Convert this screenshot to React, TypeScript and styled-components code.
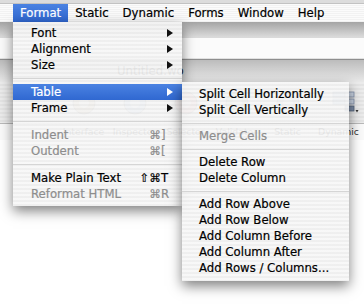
import React from "react";
import styled, { createGlobalStyle, css } from "styled-components";

const Global = createGlobalStyle`
  html, body { margin: 0; padding: 0; background: #ffffff; }
  body { font-family: "DejaVu Sans", "Liberation Sans", sans-serif; }
`;

const Screen = styled.div`
  position: relative;
  width: 364px;
  height: 304px;
  overflow: hidden;
  display: flex;
  flex-direction: column;
  background: #ffffff;
  font-size: 11.7px;
  color: #000;
`;

const TopEdge = styled.div`
  height: 3px;
  background: #dcdcdc;
  border-bottom: 1px solid #c2c2c2;
`;

const MenuBar = styled.div`
  display: flex;
  height: 18px;
  padding-left: 13px;
  background: repeating-linear-gradient(to bottom, #fbfbfb 0 1px, #f2f2f2 1px 2px);
  -webkit-text-stroke: 0.2px currentColor;
`;

const MenuTitle = styled.div<{ $active?: boolean }>`
  display: flex;
  align-items: center;
  padding: 0 7px;
  white-space: nowrap;
  ${(p) =>
    p.$active &&
    css`
      background: linear-gradient(#4a82e2, #2f66cf);
      color: #fff;
    `}
`;

const BrowserBar = styled.div`
  height: 38px;
  box-sizing: border-box;
  padding-top: 16px;
  background: linear-gradient(#a5a5a5, #dadada 15px, #e2e2e2);
  border-bottom: 1px solid #8e8e8e;
`;

const AddressField = styled.div`
  height: 20px;
  background: #fbfbfb;
`;

const TitleBar = styled.div`
  height: 22px;
  display: flex;
  align-items: center;
  padding-left: 117px;
  background: linear-gradient(#bcbcbc, #e9e9e9);
  color: #222;
`;

const Toolbar = styled.div`
  height: 41px;
  display: flex;
  padding-left: 58px;
  background: repeating-linear-gradient(to bottom, #ececec 0 2px, #e4e4e4 2px 4px);
  border-bottom: 1px solid #b9b9b9;
`;

const ToolCell = styled.div`
  width: 52px;
  display: flex;
  align-items: center;
  justify-content: center;
`;

const LabelRow = styled.div`
  height: 16px;
  display: flex;
  padding-left: 58px;
  background: #fafafa;
`;

const ToolLabel = styled.div`
  width: 52px;
  overflow: hidden;
  text-align: center;
  font-size: 9.3px;
  line-height: 16px;
  color: #333;
  white-space: nowrap;
`;

const Canvas = styled.div`
  flex: 1;
  background: #ffffff;
`;

const MenuPanel = styled.div`
  position: absolute;
  box-sizing: border-box;
  background: repeating-linear-gradient(
    to bottom,
    rgba(247, 247, 247, 0.93) 0 2px,
    rgba(238, 238, 238, 0.93) 2px 4px
  );
  box-shadow: 0 5px 12px rgba(0, 0, 0, 0.5);
  -webkit-text-stroke: 0.2px currentColor;
`;

const MainMenu = styled(MenuPanel)`
  left: 13px;
  top: 22px;
  width: 169px;
  padding: 3px 0 4px;
`;

const SubMenu = styled(MenuPanel)`
  left: 182px;
  top: 82px;
  width: 167px;
  padding: 4px 0 5px;
`;

const Item = styled.div<{ $disabled?: boolean; $selected?: boolean; $indent: number }>`
  display: flex;
  align-items: center;
  height: 16px;
  line-height: 16px;
  padding-left: ${(p) => p.$indent}px;
  color: ${(p) => (p.$disabled ? "#8d8d8d" : "#000")};
  white-space: nowrap;
  ${(p) =>
    p.$selected &&
    css`
      background: linear-gradient(#4a82e2, #3068d1);
      color: #fff;
    `}
`;

const Label = styled.span`
  flex: 1;
`;

const ArrowBox = styled.svg`
  width: 6px;
  height: 8px;
  margin-right: 9px;
  flex: none;
`;

const Shortcut = styled.span`
  display: flex;
  margin-right: 11px;
`;

const Mods = styled.span`
  text-align: right;
`;

const Key = styled.span`
  width: 10px;
`;

const Separator = styled.div<{ $h: number }>`
  height: ${(p) => p.$h}px;
  display: flex;
  align-items: center;
  &::after {
    content: "";
    flex: 1;
    height: 1px;
    background: #d5d5d5;
  }
`;

const Arrow = ({ light }: { light?: boolean }) => (
  <ArrowBox viewBox="0 0 6 8">
    <path d="M0 0 L6 4 L0 8 Z" fill={light ? "#fff" : "#111"} />
  </ArrowBox>
);

const ToolIcon = ({ kind }: { kind: number }) => {
  if (kind === 5) {
    return (
      <svg width="40" height="30" viewBox="0 0 40 30">
        <rect x="14" y="4" width="12" height="5" fill="#9fb3cf" stroke="#6a7f9f" strokeWidth="0.8" />
        <rect x="14" y="11" width="12" height="5" fill="#9fb3cf" stroke="#6a7f9f" strokeWidth="0.8" />
        <rect x="26" y="4" width="9" height="5" fill="#c9d3e2" stroke="#7f8ea7" strokeWidth="0.8" />
        <rect x="26" y="11" width="9" height="5" fill="#c9d3e2" stroke="#7f8ea7" strokeWidth="0.8" />
        <rect x="26" y="18" width="9" height="5" fill="#7b8ba5" stroke="#55647c" strokeWidth="0.8" />
        <path d="M36.5 22 L39.5 22 L38 24.5 Z" fill="#333" />
      </svg>
    );
  }
  const colors = ["#c9b79a", "#a9c0e0", "#e0a0a0", "#b5c9a5", "#b9b9c9"];
  return (
    <svg width="30" height="30" viewBox="0 0 30 30">
      <circle cx="15" cy="15" r="11" fill={colors[kind]} stroke="#8a8a8a" strokeWidth="1" />
      <circle cx="15" cy="15" r="5" fill="#f2f2f2" opacity="0.7" />
    </svg>
  );
};

type Entry =
  | { sep: number }
  | {
      label: string;
      disabled?: boolean;
      selected?: boolean;
      sub?: boolean;
      mods?: string;
      keyChar?: string;
    };

const formatItems: Entry[] = [
  { label: "Font", sub: true },
  { label: "Alignment", sub: true },
  { label: "Size", sub: true },
  { sep: 11 },
  { label: "Table", sub: true, selected: true },
  { label: "Frame", sub: true },
  { sep: 11 },
  { label: "Indent", disabled: true, mods: "\u2318", keyChar: "]" },
  { label: "Outdent", disabled: true, mods: "\u2318", keyChar: "[" },
  { sep: 11 },
  { label: "Make Plain Text", mods: "\u21E7\u2318", keyChar: "T" },
  { label: "Reformat HTML", disabled: true, mods: "\u2318", keyChar: "R" },
];

const tableItems: Entry[] = [
  { label: "Split Cell Horizontally" },
  { label: "Split Cell Vertically" },
  { sep: 10 },
  { label: "Merge Cells", disabled: true },
  { sep: 10 },
  { label: "Delete Row" },
  { label: "Delete Column" },
  { sep: 10 },
  { label: "Add Row Above" },
  { label: "Add Row Below" },
  { label: "Add Column Before" },
  { label: "Add Column After" },
  { label: "Add Rows / Columns..." },
];

const renderEntries = (entries: Entry[], indent: number) =>
  entries.map((e, i) => {
    if ("sep" in e) return <Separator key={i} $h={e.sep} />;
    return (
      <Item key={i} $indent={indent} $disabled={e.disabled} $selected={e.selected}>
        <Label>{e.label}</Label>
        {e.sub && <Arrow light={e.selected} />}
        {e.mods && (
          <Shortcut>
            <Mods>{e.mods}</Mods>
            <Key>{e.keyChar}</Key>
          </Shortcut>
        )}
      </Item>
    );
  });

const menuTitles = ["Format", "Static", "Dynamic", "Forms", "Window", "Help"];
const toolLabels = ["Interface", "Inspector", "Selector", "Validator", "Static", "Dynamic"];

export default function App() {
  return (
    <>
      <Global />
      <Screen>
        <TopEdge />
        <MenuBar>
          {menuTitles.map((t, i) => (
            <MenuTitle key={t} $active={i === 0}>
              {t}
            </MenuTitle>
          ))}
        </MenuBar>
        <BrowserBar>
          <AddressField />
        </BrowserBar>
        <TitleBar>Untitled.wo</TitleBar>
        <Toolbar>
          {toolLabels.map((t, i) => (
            <ToolCell key={t}>
              <ToolIcon kind={i} />
            </ToolCell>
          ))}
        </Toolbar>
        <LabelRow>
          {toolLabels.map((t) => (
            <ToolLabel key={t}>{t}</ToolLabel>
          ))}
        </LabelRow>
        <Canvas />
        <MainMenu>{renderEntries(formatItems, 18)}</MainMenu>
        <SubMenu>{renderEntries(tableItems, 17)}</SubMenu>
      </Screen>
    </>
  );
}
